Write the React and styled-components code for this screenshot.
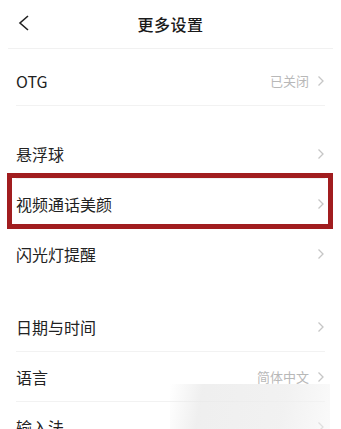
import React from 'react';
import styled, { createGlobalStyle } from 'styled-components';

const GlobalStyle = createGlobalStyle`
  body {
    margin: 0;
    background: #fff;
    font-family: "Noto Sans CJK SC", "Noto Sans", sans-serif;
  }
`;

const Page = styled.div`
  position: relative;
  width: 341px;
  height: 429px;
  overflow: hidden;
  background: #fff;
`;

const Header = styled.div`
  position: relative;
  height: 47px;
  margin: 0 8px;
  display: flex;
  align-items: center;
  justify-content: center;
  padding-bottom: 1px;
  border-bottom: 1px solid #f1f1f1;
`;

const BackButton = styled.button`
  position: absolute;
  left: 9px;
  top: 14px;
  border: none;
  background: none;
  padding: 0;
  width: 14px;
  height: 18px;
  display: flex;
`;

const Title = styled.h1`
  margin: 0;
  font-size: 16px;
  font-weight: 500;
  color: #1a1a1a;
  letter-spacing: 0.5px;
`;

const Section = styled.div`
  margin-top: ${(p) => p.$gap}px;
`;

const Row = styled.div`
  position: relative;
  height: 49px;
  margin: 0 16px;
  display: flex;
  align-items: center;
  border-bottom: 1px solid ${(p) => (p.$last ? 'transparent' : '#f2f2f2')};

  ${(p) =>
    p.$highlighted &&
    `
    &::after {
      content: '';
      position: absolute;
      left: -9px;
      right: -8px;
      top: -6px;
      bottom: -1px;
      border: 5px solid #a11d1f;
      pointer-events: none;
    }
  `}
`;

const Label = styled.span`
  flex: 1;
  font-size: 16px;
  color: #222;
`;

const Value = styled.span`
  font-size: 13px;
  color: #b8b8b8;
  margin-right: 8px;
`;

const Watermark = styled.div`
  position: absolute;
  left: 170px;
  top: 384px;
  width: 160px;
  height: 45px;
  background: linear-gradient(100deg, rgba(235, 235, 235, 0) 0%, rgba(232, 232, 232, 0.7) 20%, rgba(238, 238, 238, 0.8) 70%, rgba(245, 245, 245, 0.5) 100%);
  pointer-events: none;
`;

const Chevron = () => (
  <svg width="8" height="12" viewBox="0 0 8 12">
    <polyline points="1.5,1.5 6,6 1.5,10.5" fill="none" stroke="#c6c6c6" strokeWidth="1.3" />
  </svg>
);

const sections = [
  { gap: 7, rows: [{ label: 'OTG', value: '已关闭' }] },
  {
    gap: 23,
    rows: [
      { label: '悬浮球' },
      { label: '视频通话美颜', highlighted: true },
      { label: '闪光灯提醒', last: true },
    ],
  },
  {
    gap: 23,
    rows: [{ label: '日期与时间' }, { label: '语言', value: '简体中文' }, { label: '输入法' }],
  },
];

export default function App() {
  return (
    <>
      <GlobalStyle />
      <Page>
        <Header>
          <BackButton type="button">
            <svg width="14" height="18" viewBox="0 0 14 18">
              <polyline points="11,2 3,9 11,16" fill="none" stroke="#222" strokeWidth="1.6" />
            </svg>
          </BackButton>
          <Title>更多设置</Title>
        </Header>
        {sections.map((s, i) => (
          <Section key={i} $gap={s.gap}>
            {s.rows.map((r) => (
              <Row key={r.label} $highlighted={r.highlighted} $last={r.last}>
                <Label>{r.label}</Label>
                {r.value && <Value>{r.value}</Value>}
                <Chevron />
              </Row>
            ))}
          </Section>
        ))}
        <Watermark />
      </Page>
    </>
  );
}
